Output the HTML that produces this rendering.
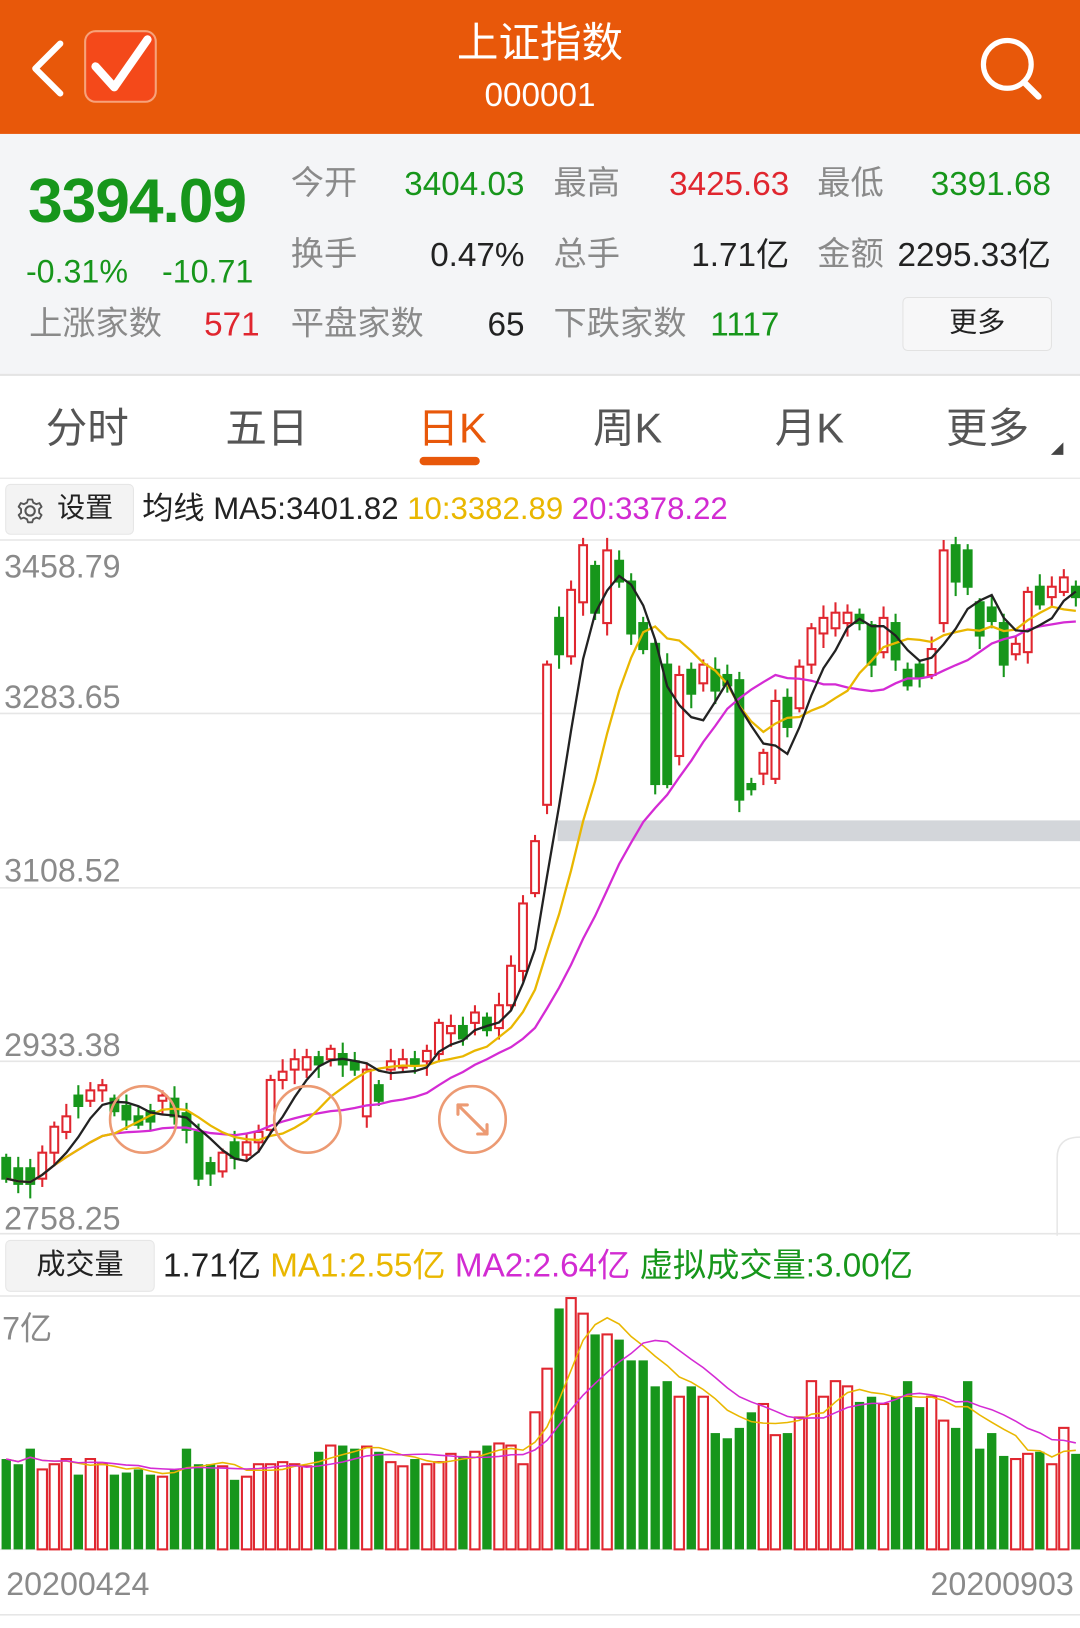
<!DOCTYPE html>
<html><head><meta charset="utf-8">
<style>
html,body{margin:0;padding:0;width:1080px;height:1628px;overflow:hidden;background:#fff;}
#w{position:absolute;left:0;top:0;width:1040px;height:1568px;transform:scale(1.03846);transform-origin:0 0;font-family:"Liberation Sans","Noto Sans CJK SC",sans-serif;}
.a{position:absolute;white-space:nowrap;line-height:1;}
.g{color:#17961b}.r{color:#e0262f}.gy{color:#8a8a8a}.dk{color:#222}
.y{color:#e9b700}.m{color:#d22bd2}
</style></head><body><div id="w">
<div class="a" style="left:0;top:0;width:1040px;height:129px;background:#e8580a"></div>
<svg class="a" style="left:0;top:0" width="1040" height="129">
<path d="M58 42 L34 66 L58 90" fill="none" stroke="#fff" stroke-width="6" stroke-linecap="round" stroke-linejoin="round"/>
<rect x="82" y="30" width="68" height="68" rx="10" fill="#f4491a" stroke="#f7a27a" stroke-width="2"/>
<path d="M92 64 L110 84 L142 38" fill="none" stroke="#fff" stroke-width="8" stroke-linecap="round" stroke-linejoin="round"/>
<circle cx="970" cy="62" r="23" fill="none" stroke="#fff" stroke-width="5"/>
<path d="M986 79 L1000 93" stroke="#fff" stroke-width="6" stroke-linecap="round"/>
</svg>
<div class="a" style="left:0;width:1040px;text-align:center;top:22px;font-size:40px;color:#fff">上证指数</div>
<div class="a" style="left:0;width:1040px;text-align:center;top:75px;font-size:32px;color:#fff">000001</div>

<div class="a" style="left:0;top:129px;width:1040px;height:231px;background:#f4f5f7;border-bottom:2px solid #e4e4e4"></div>
<div class="a g" style="left:27px;top:164px;font-size:60px;font-weight:bold;letter-spacing:-1px">3394.09</div>
<div class="a g" style="left:25px;top:246px;font-size:31px">-0.31%</div>
<div class="a g" style="left:156px;top:246px;font-size:31px">-10.71</div>
<div class="a gy" style="left:280px;top:160px;font-size:32px">今开</div>
<div class="a g" style="right:535px;top:161px;font-size:32px">3404.03</div>
<div class="a gy" style="left:533px;top:160px;font-size:32px">最高</div>
<div class="a r" style="right:280px;top:161px;font-size:32px">3425.63</div>
<div class="a gy" style="left:787px;top:160px;font-size:32px">最低</div>
<div class="a g" style="right:28px;top:161px;font-size:32px">3391.68</div>
<div class="a gy" style="left:280px;top:228px;font-size:32px">换手</div>
<div class="a dk" style="right:535px;top:229px;font-size:32px">0.47%</div>
<div class="a gy" style="left:533px;top:228px;font-size:32px">总手</div>
<div class="a dk" style="right:280px;top:229px;font-size:32px">1.71亿</div>
<div class="a gy" style="left:787px;top:228px;font-size:32px">金额</div>
<div class="a dk" style="right:28px;top:229px;font-size:32px">2295.33亿</div>
<div class="a gy" style="left:28px;top:295px;font-size:32px">上涨家数</div>
<div class="a r" style="right:790px;top:296px;font-size:32px">571</div>
<div class="a gy" style="left:280px;top:295px;font-size:32px">平盘家数</div>
<div class="a dk" style="right:535px;top:296px;font-size:32px">65</div>
<div class="a gy" style="left:533px;top:295px;font-size:32px">下跌家数</div>
<div class="a g" style="left:684px;top:296px;font-size:32px">1117</div>
<div class="a" style="left:869px;top:286px;width:142px;height:50px;background:#f7f7f8;border:1px solid #e2e2e2;border-radius:5px"></div>
<div class="a dk" style="left:869px;top:297px;width:144px;text-align:center;font-size:27px">更多</div>

<div class="a" style="left:0;top:460px;width:1040px;height:1px;background:#e2e2e2"></div>
<div class="a" style="left:44px;top:393px;font-size:40px;color:#555">分时</div>
<div class="a" style="left:217px;top:393px;font-size:40px;color:#555">五日</div>
<div class="a" style="left:402px;top:393px;font-size:40px;color:#e8580a">日K</div>
<div class="a" style="left:571px;top:393px;font-size:40px;color:#555">周K</div>
<div class="a" style="left:746px;top:393px;font-size:40px;color:#555">月K</div>
<div class="a" style="left:911px;top:393px;font-size:40px;color:#555">更多</div>
<div class="a" style="left:404px;top:440px;width:58px;height:8px;border-radius:4px;background:#e8580a"></div>
<svg class="a" style="left:1010px;top:424px" width="16" height="16"><path d="M14 2 L14 14 L2 14Z" fill="#444"/></svg>

<div class="a" style="left:5px;top:466px;width:122px;height:47px;background:#f3f3f3;border-radius:5px;border:1px solid #e6e6e6"></div>
<svg class="a" style="left:15px;top:478px" width="28" height="28" viewBox="0 0 28 28"><circle cx="14" cy="14" r="4.5" fill="none" stroke="#555" stroke-width="2"/><path d="M12 3h4l1 3 3 1.5 3-1 2 3.5-2.3 2.2v3.6l2.3 2.2-2 3.5-3-1L17 22l-1 3h-4l-1-3-3-1.5-3 1-2-3.5 2.3-2.2v-3.6L3 10l2-3.5 3 1L11 6z" fill="none" stroke="#555" stroke-width="1.8" stroke-linejoin="round"/></svg>
<div class="a dk" style="left:55px;top:476px;font-size:27px">设置</div>
<div class="a" style="left:137px;top:476px;font-size:30px"><span class="dk">均线 MA5:3401.82 </span><span class="y">10:3382.89 </span><span class="m">20:3378.22</span></div>

<div class="a" style="left:5px;top:1194px;width:142px;height:48px;background:#f3f3f3;border-radius:5px;border:1px solid #e6e6e6"></div>
<div class="a dk" style="left:5px;top:1204px;width:144px;text-align:center;font-size:28px">成交量</div>
<div class="a" style="left:157px;top:1202px;font-size:32px"><span class="dk">1.71亿 </span><span class="y">MA1:2.55亿 </span><span class="m">MA2:2.64亿 </span><span class="g">虚拟成交量:3.00亿</span></div>

<svg id="ch" class="a" style="left:0;top:0" width="1040" height="1568"></svg>
<div class="a gy" style="left:4px;top:530px;font-size:31px">3458.79</div>
<div class="a gy" style="left:4px;top:656px;font-size:31px">3283.65</div>
<div class="a gy" style="left:4px;top:823px;font-size:31px">3108.52</div>
<div class="a gy" style="left:4px;top:991px;font-size:31px">2933.38</div>
<div class="a gy" style="left:4px;top:1158px;font-size:31px">2758.25</div>
<div class="a gy" style="left:2px;top:1264px;font-size:31px">7亿</div>
<div class="a gy" style="left:6px;top:1510px;font-size:31px">20200424</div>
<div class="a gy" style="right:6px;top:1510px;font-size:31px">20200903</div>
</div>
<script>
var C=[[1115,1135],[1125,1140],[1125,1140],[1135,1110],[1110,1085],[1090,1075],[1055,1065],[1060,1050],[1050,1045],[1058,1070],[1065,1078],[1075,1083],[1070,1080],[1060,1055],[1058,1075],[1072,1088],[1090,1135],[1120,1130],[1128,1110],[1100,1115],[1112,1100],[1100,1090],[1088,1040],[1040,1032],[1030,1020],[1030,1018],[1018,1025],[1020,1010],[1015,1025],[1022,1030],[1075,1030],[1045,1060],[1030,1022],[1028,1020],[1020,1025],[1022,1012],[1015,985],[995,988],[988,1000],[985,975],[980,992],[990,968],[968,930],[935,870],[860,810],[775,640],
[595,630],[632,568],[580,525],[545,590],[600,530],[540,560],[560,610],[600,625],[620,755],[640,755],[728,650],[645,668],[658,640],[645,665],[650,660],[655,770],[755,760],[745,725],[750,675],[672,700],[682,642],[640,605],[610,595],[605,590],[600,590],[592,600],[602,640],[628,595],[600,635],[645,660],[640,652],[650,625],[600,530],[525,560],[530,565],[580,612],[585,598],[600,640],[630,620],[628,570],[565,582],[575,565],[570,556],[565,575]];
var V=[1405,1410,1395,1415,1410,1405,1420,1405,1410,1420,1418,1415,1420,1422,1415,1395,1410,1410,1412,1425,1422,1410,1410,1408,1410,1412,1398,1392,1392,1395,1393,1398,1408,1412,1405,1410,1408,1400,1402,1398,1392,1390,1392,1410,1360,1318,1260,1250,1265,1285,1285,1290,1310,1310,1335,1330,1345,1335,1345,1380,1385,1375,1360,1352,1382,1380,1365,1330,1345,1330,1335,1350,1345,1352,1345,1330,1355,1345,1368,1375,1330,1395,1380,1402,1405,1400,1398,1410,1375,1400];
var s='';var top=520,bot=1188;
[520,687,855,1022,1188,1248,1492,1555].forEach(function(y){s+='<line x1="0" x2="1040" y1="'+y+'" y2="'+y+'" stroke="#e6e6e6" stroke-width="1.5"/>';});
s+='<rect x="537" y="790" width="503" height="20" fill="#d3d6da"/>';
s+='<path d="M1040 1095 Q1018 1095 1018 1115 L1018 1190" fill="none" stroke="#e6e6e6" stroke-width="1.5"/>';
var n=C.length,dx=(1036-6)/(n-1),w=7.5;
function X(i){return 6+i*dx;}
var cl=C.map(function(c){return c[1];});
for(var i=0;i<n;i++){var o=C[i][0],c=C[i][1],x=X(i),up=c<o;var t=Math.min(o,c),b=Math.max(o,c);if(b-t<2)b=t+2;
var h=t-4-(i*7%9),l=b+4+(i*5%11);
var col=up?'#e0262f':'#17961b';
s+='<line x1="'+x+'" x2="'+x+'" y1="'+h+'" y2="'+l+'" stroke="'+col+'" stroke-width="2"/>';
s+='<rect x="'+(x-w/2)+'" y="'+t+'" width="'+w+'" height="'+(b-t)+'" fill="'+(up?'#fff':col)+'" stroke="'+col+'" stroke-width="2"/>';
var vt=V[i];var bw=9;
s+='<rect x="'+(x-bw/2)+'" y="'+vt+'" width="'+bw+'" height="'+(1492-vt)+'" fill="'+(up?'#fff':col)+'" stroke="'+col+'" stroke-width="'+(up?2:0)+'"/>';}
function ma(arr,k,col,sw){var p='';for(var i=0;i<arr.length;i++){var a=0,m=0;for(var j=Math.max(0,i-k+1);j<=i;j++){a+=arr[j];m++;}p+=(i?'L':'M')+X(i).toFixed(1)+' '+(a/m).toFixed(1);}s+='<path d="'+p+'" fill="none" stroke="'+col+'" stroke-width="'+sw+'"/>';}
ma(cl,20,'#d42bd4',2.2);ma(cl,10,'#e9b700',2.2);ma(cl,5,'#222',2.2);
ma(V,5,'#e9b700',1.5);ma(V,10,'#d42bd4',1.5);
[[138,1078],[296,1078],[455,1078]].forEach(function(p,k){s+='<circle cx="'+p[0]+'" cy="'+p[1]+'" r="32" fill="none" stroke="#ec9a73" stroke-width="2.5"/>';});
s+='<path d="M441 1064 L469 1092 M441 1064 l0 9 M441 1064 l9 0 M469 1092 l0 -9 M469 1092 l-9 0" stroke="#ec9a73" stroke-width="3" fill="none" stroke-linecap="round"/>';
document.getElementById('ch').innerHTML=s;
</script>
</body></html>
